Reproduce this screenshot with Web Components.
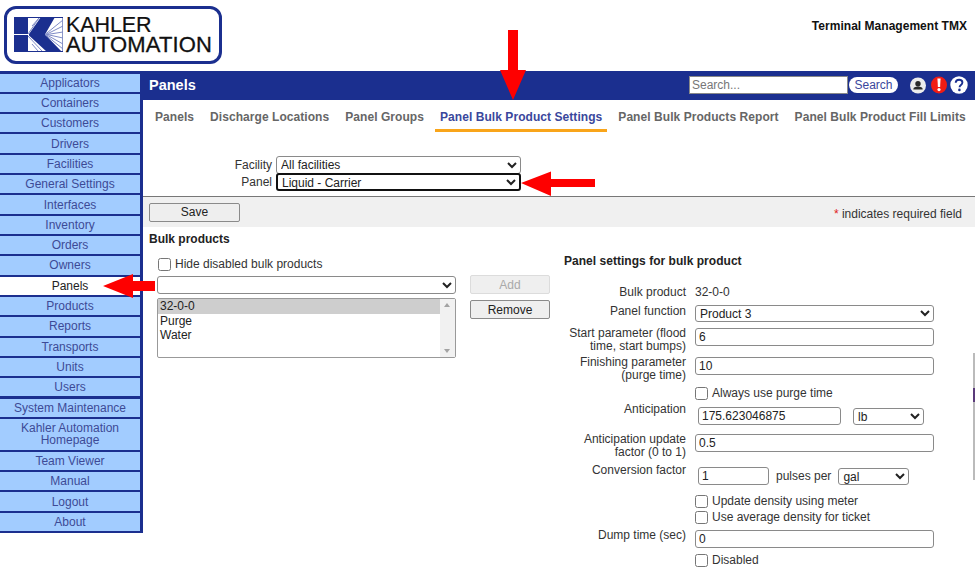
<!DOCTYPE html>
<html>
<head>
<meta charset="utf-8">
<title>Panels</title>
<style>
  html, body { margin: 0; padding: 0; background: #fff; }
  body { font-family: "Liberation Sans", Arial, sans-serif; font-size: 12px; color: #222; width: 975px; height: 572px; overflow: hidden; position: relative; }
</style>
</head>
<body>
<k-app></k-app>

<script>
const NAV_ITEMS = [
  "Applicators", "Containers", "Customers", "Drivers", "Facilities", "General Settings",
  "Interfaces", "Inventory", "Orders", "Owners", "Panels", "Products", "Reports",
  "Transports", "Units", "Users", "System Maintenance", "Kahler Automation Homepage",
  "Team Viewer", "Manual", "Logout", "About",
];
const TABS = [
  "Panels", "Discharge Locations", "Panel Groups", "Panel Bulk Product Settings",
  "Panel Bulk Products Report", "Panel Bulk Product Fill Limits",
];

class KLogo extends HTMLElement {
  constructor() {
    super();
    this.attachShadow({ mode: "open" });
    this.shadowRoot.innerHTML = `
      <style>
        :host { display: block; width: 218px; height: 58px; box-sizing: border-box; border: 3px solid #1b2f8f; border-radius: 12px; background: #fff; }
        .wrap { display: flex; align-items: flex-start; height: 100%; padding: 6px 0 0 7px; gap: 3px; box-sizing: border-box; }
        .name { color: #111; font-family: "Liberation Sans", Arial, sans-serif; }
        .k { font-size: 21.5px; line-height: 20px; height: 20px; letter-spacing: -0.1px; -webkit-text-stroke: 0.2px #111; }
        .a { font-size: 22px; line-height: 20px; height: 20px; letter-spacing: 0.15px; -webkit-text-stroke: 0.3px #111; }
        svg { flex: none; display: block; margin-top: 2px; }
      </style>
      <div class="wrap">
        <svg width="49" height="35" viewBox="0 0 49 35">
          <rect x="0" y="0" width="14" height="17" fill="#1b2f8f"/>
          <rect x="0" y="18" width="14" height="17" fill="#1b2f8f"/>
          <path d="M14 .5H49V34.5H14" fill="none" stroke="#1b2f8f" stroke-width="1"/>
          <path d="M14 17L25 1M18 9L25 1M14 19L28 34M18 27L24 34" stroke="#7f8bc6" stroke-width="1" fill="none"/>
          <path d="M15 17L27 0H41L31 17.5L48 35H33L15 18.5Z" fill="#1b2f8f"/>
          <path d="M31 17.5L49 3M32 17.5L49 9M33 17.5L49 15M33 17.5L49 21M32 17.5L49 27M31 17.5L49 32" stroke="#7f8bc6" stroke-width="1"/>
        </svg>
        <div class="name"><div class="k">KAHLER</div><div class="a">AUTOMATION</div></div>
      </div>`;
  }
}
customElements.define("k-logo", KLogo);

class KNavItem extends HTMLElement {
  constructor() {
    super();
    this.attachShadow({ mode: "open" });
    this.shadowRoot.innerHTML = `
      <style>
        :host { display: flex; align-items: center; justify-content: center; text-align: center; box-sizing: border-box; min-height: 18.3px; padding: 0 4px; background: #a2ccff; color: #3d4a96; font-size: 12px; line-height: 12px; }
        :host([active]) { background: #fff; color: #222; }
      </style>
      <slot></slot>`;
  }
}
customElements.define("k-nav-item", KNavItem);

class KNav extends HTMLElement {
  constructor() {
    super();
    this.attachShadow({ mode: "open" });
    this.shadowRoot.innerHTML = `
      <style>
        :host { display: flex; flex-direction: column; gap: 2.03px; width: 143px; box-sizing: border-box; background: #1b2f8f; border-right: 3px solid #1b2f8f; padding: 2.5px 0 1.5px; flex: none; align-self: flex-start; }
        k-nav-item.two { min-height: 31px; }
      </style>
      ${NAV_ITEMS.map((n) => `<k-nav-item class="${n.length > 20 ? "two" : ""}" ${n === "Panels" ? "active" : ""}>${n}</k-nav-item>`).join("")}`;
  }
}
customElements.define("k-nav", KNav);

class KTopbar extends HTMLElement {
  constructor() {
    super();
    this.attachShadow({ mode: "open" });
    this.shadowRoot.innerHTML = `
      <style>
        :host { display: flex; align-items: center; height: 29px; background: #1b2f8f; color: #fff; padding: 0 7px 1px 6px; box-sizing: border-box; }
        h1 { margin: 0; font-size: 14.5px; font-weight: bold; flex: 1; }
        input { box-sizing: border-box; width: 159px; height: 18px; padding: 0 2px; border: 1px solid #888; background: #fff; font: 12px "Liberation Sans", Arial, sans-serif; border-radius: 0; }
        input::placeholder { color: #777; opacity: 1; }
        button { height: 16px; width: 49px; margin-left: 1px; padding: 0; border: 0; border-radius: 8px; background: #fff; color: #3a479c; font: 12px/16px "Liberation Sans", Arial, sans-serif; }
        .icons { display: flex; align-items: center; margin-left: 11px; }
        svg { display: block; }
      </style>
      <h1>Panels</h1>
      <input placeholder="Search...">
      <button>Search</button>
      <div class="icons">
        <svg width="18" height="18" viewBox="0 0 18 18" style="margin-right:4px"><circle cx="9" cy="9.5" r="8" fill="#ececec"/><circle cx="9" cy="7.8" r="2.7" fill="#2a2a2a"/><path d="M4.3 13.6c0-2.2 2-3 4.7-3s4.7.8 4.7 3z" fill="#2a2a2a"/></svg>
        <svg width="16" height="18" viewBox="0 0 16 18" style="margin-right:3px"><ellipse cx="8" cy="9" rx="8" ry="8.5" fill="#f01c14"/><path d="M6.4 2.6h3.2l-.5 8.4h-2.2z" fill="#fff"/><circle cx="8" cy="13.6" r="1.6" fill="#fff"/></svg>
        <svg width="18" height="18" viewBox="0 0 18 18"><circle cx="9" cy="9" r="8.7" fill="#fff"/><path d="M5.7 6.8c.1-2 1.5-3.1 3.4-3.1 2 0 3.3 1.1 3.3 2.8 0 1.4-.8 2-1.7 2.7-.8.6-1.1 1-1.1 2" fill="none" stroke="#1b2f8f" stroke-width="1.9"/><circle cx="9.4" cy="13.9" r="1.3" fill="#1b2f8f"/></svg>
      </div>`;
  }
}
customElements.define("k-topbar", KTopbar);

class KTabs extends HTMLElement {
  constructor() {
    super();
    this.attachShadow({ mode: "open" });
    this.shadowRoot.innerHTML = `
      <style>
        :host { display: flex; height: 32px; box-sizing: border-box; padding-left: 7px; gap: 6px; font-size: 12px; font-weight: bold; color: #666; white-space: nowrap; letter-spacing: 0.06px; }
        span { display: block; padding: 10px 5px 0; box-sizing: border-box; height: 32px; }
        span.on { color: #3a479c; border-bottom: 3px solid #f9a51a; }
      </style>
      ${TABS.map((t, i) => `<span class="${i === 3 ? "on" : ""}">${t}</span>`).join("")}`;
  }
}
customElements.define("k-tabs", KTabs);

// rows of the two column form: label on the right of its column, control after it
class KRow extends HTMLElement {
  constructor() {
    super();
    this.attachShadow({ mode: "open" });
    this.shadowRoot.innerHTML = `
      <style>
        :host { display: grid; grid-template-columns: 122px 1fr; column-gap: 9px; align-items: start; }
        .l { text-align: right; line-height: 12.5px; color: #333; padding-top: var(--lt, 0); }
        .c { display: flex; align-items: flex-start; min-width: 0; }
      </style>
      <div class="l"><slot name="label"></slot></div>
      <div class="c"><slot></slot></div>`;
  }
}
customElements.define("k-row", KRow);

class KListbox extends HTMLElement {
  constructor() {
    super();
    this.attachShadow({ mode: "open" });
    this.shadowRoot.innerHTML = `
      <style>
        :host { display: block; box-sizing: border-box; width: 299px; height: 60px; border: 1px solid #999; border-radius: 2px; position: relative; background: #fff; font-size: 12px; line-height: 14.5px; color: #222; }
        .opt { padding-left: 2px; margin-right: 15px; height: 14.5px; }
        .opt.sel { background: #cecece; }
        .bar { position: absolute; top: 0; right: 0; bottom: 0; width: 15px; background: #f1f1f1; }
        .bar::before, .bar::after { content: ""; position: absolute; left: 4px; border: 3.5px solid transparent; }
        .bar::before { top: 4px; border-bottom: 4px solid #a3a3a3; border-top: 0; }
        .bar::after { bottom: 4px; border-top: 4px solid #a3a3a3; border-bottom: 0; }
      </style>
      <div class="opt sel">32-0-0</div>
      <div class="opt">Purge</div>
      <div class="opt">Water</div>
      <div class="bar"></div>`;
  }
}
customElements.define("k-listbox", KListbox);

const CTRL = `
  select, input[type=text] { box-sizing: border-box; height: 18px; font: 12px "Liberation Sans", Arial, sans-serif; color: #222; background: #fff; border: 1px solid #8a8a8a; border-radius: 3px; margin: 0; }
  input[type=text] { padding: 0 3px; }
  select { padding: 0; }
  input[type=checkbox] { width: 13px; height: 13px; margin: 0; flex: none; }
  label { display: flex; align-items: center; gap: 4px; color: #333; }
  button { box-sizing: border-box; font: 12px "Liberation Sans", Arial, sans-serif; color: #222; background: #efefef; border: 1px solid #8a8a8a; border-radius: 2px; padding: 0; }
  button[disabled] { color: #a9a9a9; background: #efefef; border-color: #dcdcdc; }
`;

class KFilters extends HTMLElement {
  constructor() {
    super();
    this.attachShadow({ mode: "open" });
    this.shadowRoot.innerHTML = `
      <style>
        ${CTRL}
        :host { display: grid; grid-template-columns: 128px 245px; grid-auto-rows: 17.5px; column-gap: 4px; height: 65px; box-sizing: border-box; padding: 24px 0 0 1px; align-items: center; border-bottom: 1px solid #777; }
        .l { text-align: right; color: #333; }
        select { width: 245px; height: 18px; }
        select.on { border: 2px solid #111; }
      </style>
      <div class="l">Facility</div>
      <select><option>All facilities</option></select>
      <div class="l">Panel</div>
      <select class="on"><option>Liquid - Carrier</option></select>`;
  }
}
customElements.define("k-filters", KFilters);

class KSavebar extends HTMLElement {
  constructor() {
    super();
    this.attachShadow({ mode: "open" });
    this.shadowRoot.innerHTML = `
      <style>
        ${CTRL}
        :host { display: flex; align-items: center; justify-content: space-between; height: 30px; padding: 0 13px 0 6px; background: #f0f0f0; box-sizing: border-box; }
        button { width: 91px; height: 19px; background: #eee; }
        i { font-style: normal; color: #e02020; }
        span { color: #333; padding-top: 3px; }
      </style>
      <button>Save</button>
      <span><i>*</i> indicates required field</span>`;
  }
}
customElements.define("k-savebar", KSavebar);

class KProductList extends HTMLElement {
  constructor() {
    super();
    this.attachShadow({ mode: "open" });
    this.shadowRoot.innerHTML = `
      <style>
        ${CTRL}
        :host { display: block; width: 415px; padding: 5px 0 0 6px; box-sizing: border-box; flex: none; }
        h2 { margin: 0 0 11px; font-size: 12px; line-height: 14px; color: #222; }
        label { margin-left: 9px; height: 14px; margin-bottom: 5px; }
        .cols { display: grid; grid-template-columns: 299px 80px; column-gap: 14px; margin-left: 8px; grid-template-rows: 18px 60px; row-gap: 4px; }
        select { width: 299px; }
        .btns { display: flex; flex-direction: column; gap: 6px; grid-row: 1 / 3; grid-column: 2; margin-top: -1px; }
        .btns button { width: 80px; height: 19px; }
      </style>
      <h2>Bulk products</h2>
      <label><input type="checkbox">Hide disabled bulk products</label>
      <div class="cols">
        <select><option></option></select>
        <div class="btns"><button disabled>Add</button><button>Remove</button></div>
        <k-listbox></k-listbox>
      </div>`;
  }
}
customElements.define("k-product-list", KProductList);

class KSettings extends HTMLElement {
  constructor() {
    super();
    this.attachShadow({ mode: "open" });
    this.shadowRoot.innerHTML = `
      <style>
        ${CTRL}
        :host { display: block; flex: 1; padding: 27px 0 0 6px; box-sizing: border-box; color: #333; }
        h2 { margin: 0 0 16px; font-size: 12px; line-height: 14px; color: #222; letter-spacing: 0.03px; }
        .stack { display: flex; flex-direction: column; }
        .w { width: 239px; }
        select.w { height: 17px; }
        input.m1 { margin-top: 1px; }
        input.ant { width: 143px; margin: 4px 0 0 3px; }
        select.u { width: 71px; margin: 5px 0 0 12px; height: 17px; }
        input.conv { width: 71px; margin: 4px 0 0 3px; }
        .pp { margin: 6px 7px 0; line-height: 14px; }
        select.g { width: 71px; height: 17px; margin-top: 5px; }
      </style>
      <h2>Panel settings for bulk product</h2>
      <div class="stack">
        <k-row style="height:21px;--lt:2px"><span slot="label">Bulk product</span><span style="padding-top:2px;line-height:12.5px">32-0-0</span></k-row>
        <k-row style="height:22px"><span slot="label">Panel function</span><select class="w"><option>Product 3</option></select></k-row>
        <k-row style="height:29px"><span slot="label">Start parameter (flood<br>time, start bumps)</span><input type="text" class="w m1" value="6"></k-row>
        <k-row style="height:30px"><span slot="label">Finishing parameter<br>(purge time)</span><input type="text" class="w m1" value="10"></k-row>
        <k-row style="height:17px"><span slot="label"></span><label><input type="checkbox">Always use purge time</label></k-row>
        <k-row style="height:30px"><span slot="label">Anticipation</span><input type="text" class="ant" value="175.623046875"><select class="u"><option>lb</option></select></k-row>
        <k-row style="height:30px"><span slot="label">Anticipation update<br>factor (0 to 1)</span><input type="text" class="w m1" value="0.5"></k-row>
        <k-row style="height:30px;--lt:0.5px"><span slot="label">Conversion factor</span><input type="text" class="conv" value="1"><span class="pp">pulses per</span><select class="g"><option>gal</option></select></k-row>
        <k-row style="height:17px"><span slot="label"></span><label style="margin-top:1px"><input type="checkbox">Update density using meter</label></k-row>
        <k-row style="height:19px"><span slot="label"></span><label><input type="checkbox">Use average density for ticket</label></k-row>
        <k-row style="height:24px"><span slot="label">Dump time (sec)</span><input type="text" class="w m1" value="0"></k-row>
        <k-row style="height:16px"><span slot="label"></span><label><input type="checkbox">Disabled</label></k-row>
      </div>`;
  }
}
customElements.define("k-settings", KSettings);

// red annotation arrow laid over the screenshot
class KArrow extends HTMLElement {
  constructor() {
    super();
    this.attachShadow({ mode: "open" });
  }
  connectedCallback() {
    const w = this.getAttribute("w");
    const h = this.getAttribute("h");
    this.shadowRoot.innerHTML = `
      <style>:host { position: absolute; display: block; left: ${this.getAttribute("x")}px; top: ${this.getAttribute("y")}px; } svg { display: block; }</style>
      <svg width="${w}" height="${h}" viewBox="0 0 ${w} ${h}"><path d="${this.getAttribute("d")}" fill="#fe0000"/></svg>`;
  }
}
customElements.define("k-arrow", KArrow);

class KApp extends HTMLElement {
  constructor() {
    super();
    this.attachShadow({ mode: "open" });
    this.shadowRoot.innerHTML = `
      <style>
        :host { display: block; width: 975px; height: 572px; position: relative; overflow: hidden; }
        .head { display: flex; justify-content: space-between; height: 71px; box-sizing: border-box; padding: 6px 8px 0 4px; }
        .tmx { font-size: 12px; font-weight: bold; color: #111; padding-top: 13px; letter-spacing: 0.03px; }
        .body { display: flex; height: 501px; }
        main { flex: 1; min-width: 0; }
        .cols { display: flex; }
        .edge { position: absolute; left: 973px; top: 353px; width: 2px; height: 127px; background: linear-gradient(#bbb 0 35px, #5a3a7a 35px 49px, #bbb 49px); }
      </style>
      <div class="head"><k-logo></k-logo><div class="tmx">Terminal Management TMX</div></div>
      <div class="body">
        <k-nav></k-nav>
        <main>
          <k-topbar></k-topbar>
          <k-tabs></k-tabs>
          <k-filters></k-filters>
          <k-savebar></k-savebar>
          <div class="cols"><k-product-list></k-product-list><k-settings></k-settings></div>
        </main>
      </div>
      <div class="edge"></div>
      <k-arrow x="500" y="30" w="27" h="71" d="M8 0H18V40H26L13 70L0 40H8Z"></k-arrow>
      <k-arrow x="521" y="169" w="75" h="28" d="M0 14L30 2.5V10H74V18H30V27Z"></k-arrow>
      <k-arrow x="103" y="273" w="53" h="26" d="M0 13L30 1V8H52V18H30V25Z"></k-arrow>`;
  }
}
customElements.define("k-app", KApp);
</script>
</body>
</html>
